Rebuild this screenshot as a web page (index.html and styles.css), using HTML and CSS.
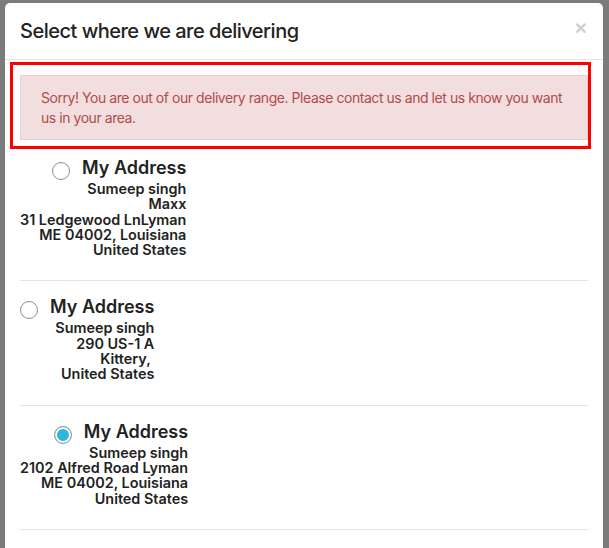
FILE: index.html
```html
<!DOCTYPE html>
<html lang="en">
<head>
<meta charset="utf-8">
<title>Select where we are delivering</title>
<link rel="stylesheet" href="styles.css">
</head>
<body>
<div class="modal">
  <div class="modal-header">
    <button class="close" type="button">×</button>
    <h4 class="modal-title">Select where we are delivering</h4>
  </div>
  <div class="modal-body">
    <div class="highlight"></div>
    <div class="alert">Sorry! You are out of our delivery range. Please contact us and let us know you want us in your area.</div>
    <ul class="addr-list">
      <li class="addr-item">
        <label class="addr-card">
          <span class="addr-head"><span class="radio"></span><span class="addr-title">My Address</span></span>
          <span class="addr-line">Sumeep singh</span>
          <span class="addr-line">Maxx</span>
          <span class="addr-line">31 Ledgewood LnLyman</span>
          <span class="addr-line">ME 04002, Louisiana</span>
          <span class="addr-line">United States</span>
        </label>
      </li>
      <li class="addr-item">
        <label class="addr-card">
          <span class="addr-head"><span class="radio"></span><span class="addr-title">My Address</span></span>
          <span class="addr-line">Sumeep singh</span>
          <span class="addr-line">290 US-1 A</span>
          <span class="addr-line">Kittery,&nbsp;</span>
          <span class="addr-line">United States</span>
        </label>
      </li>
      <li class="addr-item">
        <label class="addr-card">
          <span class="addr-head"><span class="radio radio-checked"></span><span class="addr-title">My Address</span></span>
          <span class="addr-line">Sumeep singh</span>
          <span class="addr-line">2102 Alfred Road Lyman</span>
          <span class="addr-line">ME 04002, Louisiana</span>
          <span class="addr-line">United States</span>
        </label>
      </li>
    </ul>
  </div>
</div>
</body>
</html>
```

FILE: styles.css
```css
html, body {
  margin: 0;
  padding: 0;
  height: 100%;
  overflow: hidden;
}
body {
  background: #7b7b7b;
  font-family: Inter, "Noto Sans", "Liberation Sans", sans-serif;
  color: #222;
}
.modal {
  margin: 3px 6px 0 5px;
  background: #fff;
  border-radius: 5px 5px 0 0;
  min-height: 600px;
}
.modal-header {
  padding: 15px;
  border-bottom: 1px solid #e5e5e5;
}
.modal-title {
  margin: 0;
  font-size: 20px;
  line-height: 26px;
  font-weight: 500;
  letter-spacing: -0.5px;
  color: #222;
}
.close {
  float: right;
  margin: -1px 1px 0 0;
  padding: 0;
  border: 0;
  background: none;
  font-family: "Liberation Sans", Arial, sans-serif;
  font-size: 21px;
  line-height: 21px;
  font-weight: bold;
  color: #cfcfcf;
}
.modal-body {
  position: relative;
  padding: 15px;
}
.highlight {
  position: absolute;
  left: 5px;
  right: 12px;
  top: 2px;
  height: 81px;
  border: 3px solid #ff0000;
  pointer-events: none;
}
.alert {
  padding: 12px 20px;
  margin-bottom: 2px;
  background: #f2dede;
  border: 1px solid #ebccd1;
  color: #b24b4c;
  font-size: 14px;
  line-height: 19.5px;
  letter-spacing: -0.45px;
}
.addr-list {
  list-style: none;
  margin: 0;
  padding: 0;
}
.addr-item {
  display: flex;
  align-items: flex-start;
  padding: 13px 0 23px;
  border-bottom: 1px solid #e5e5e5;
}
.addr-card {
  display: block;
  text-align: right;
}
.addr-head {
  display: block;
  line-height: 25px;
}
.addr-title {
  font-size: 18px;
  font-weight: 600;
  color: #222;
}
.radio {
  display: inline-block;
  width: 16px;
  height: 16px;
  margin-right: 12px;
  margin-bottom: -6px;
  border: 1px solid #8e8e8e;
  border-radius: 50%;
  background: #fff;
  vertical-align: baseline;
}
.radio-checked {
  background: #2ab7dd;
  box-shadow: inset 0 0 0 2px #fff;
  border-color: #9a9a9a;
}
.addr-line {
  display: block;
  font-size: 14.4px;
  line-height: 15.3px;
  font-weight: 600;
  color: #222;
}
```
